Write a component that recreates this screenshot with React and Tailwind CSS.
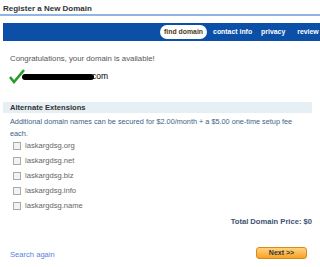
export default function App() {
  const exts = ["org", "net", "biz", "info", "name"];

  return (
    <div className="w-[320px] h-[267px] bg-white overflow-hidden font-['Liberation_Sans',Arial,sans-serif] text-[7.6px]">
      {/* header */}
      <div className="px-[3px] pt-[3px] h-[14px] font-bold text-[8px] text-[#333]">Register a New Domain</div>
      <div className="h-[2px] bg-[#8fb5e3]" />

      {/* steps bar */}
      <div className="mt-[7px] ml-[3px] h-[18px] bg-[#0b4fa6] flex items-center pl-[157px] gap-[6px] overflow-hidden whitespace-nowrap text-[6.9px]">
        <div className="bg-white rounded-full h-[14px] px-[4px] flex items-center font-bold text-[#4a3a20]">find domain</div>
        <div className="font-bold text-white">contact info</div>
        <div className="font-bold text-white ml-[3px]">privacy</div>
        <div className="font-bold text-white ml-[6px]">review</div>
      </div>

      {/* success */}
      <div className="px-[10px] pt-[12px] text-[#555] text-[7.8px]">Congratulations, your domain is available!</div>
      <div className="pl-[9px] mt-[4px] h-[16px] flex items-center">
        <svg width="16" height="15" viewBox="0 0 16 15">
          <path d="M1 8 L5 13 L15 1" fill="none" stroke="#2a9a2a" strokeWidth="2.6" />
        </svg>
        <div className="-ml-[3px] flex items-center">
          <div className="w-[72px] h-[6px] bg-black rounded-sm" />
          <span className="text-black text-[8.5px] -ml-[2px]">com</span>
        </div>
      </div>

      {/* alternate */}
      <div className="mt-[17px] ml-[3px] mr-[8px] h-[11px] bg-[#e6eff3] flex items-center px-[7px] font-bold text-[#333]">
        Alternate Extensions
      </div>
      <div className="px-[10px] pt-[3px] leading-[12px] text-[#3d5f86] text-[7.3px]">
        Additional domain names can be secured for $2.00/month + a $5.00 one-time setup fee each.
      </div>
      <div className="pl-[13px] pt-[1px] flex flex-col gap-[5px]">
        {exts.map((e) => (
          <div key={e} className="flex items-center gap-[4px] h-[10px]">
            <div className="w-[8px] h-[8px] border border-[#aaa] bg-[#f2f2f2]" />
            <span className="text-[#666]">laskargdsg.{e}</span>
          </div>
        ))}
      </div>

      <div className="flex justify-end pr-[8px] mt-[5px] font-bold text-[#3d5270]">Total Domain Price: $0</div>

      <div className="flex items-center justify-between pl-[10px] pr-[13px] mt-[18px]">
        <span className="text-[#5585d8] mt-[4px]">Search again</span>
        <button className="w-[51px] h-[12px] rounded-[3px] border border-[#d98a1a] bg-gradient-to-b from-[#ffd27a] to-[#f7a21c] font-bold text-[7px] text-[#333] flex items-center justify-center">
          Next &gt;&gt;
        </button>
      </div>
    </div>
  );
}
